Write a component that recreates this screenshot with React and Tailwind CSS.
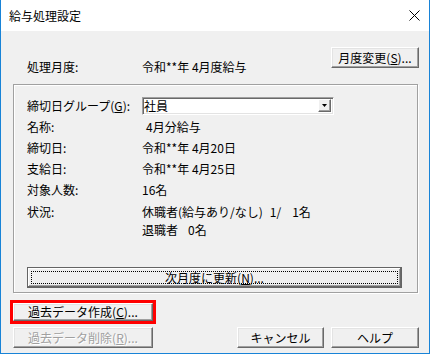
import React from "react";

const font = { fontFamily: '"Noto Sans CJK JP", "Liberation Sans", sans-serif' };

function Btn({ children, className = "", disabled = false }) {
  return (
    <div
      className={
        "flex items-center justify-center bg-[#f0f0f0] border border-t-white border-l-white border-b-[#696969] border-r-[#696969] shadow-[inset_-1px_-1px_0_#a0a0a0,inset_1px_1px_0_#e3e3e3] text-[12px] leading-[14px] " +
        (disabled ? "text-[#a0a0a0] [text-shadow:1px_1px_0_#fff] " : "text-black ") +
        className
      }
    >
      {children}
    </div>
  );
}

function Row({ label, children, h = "h-[21px]" }) {
  return (
    <div className={"flex items-center " + h}>
      <div className="w-[115px] shrink-0">{label}</div>
      <div className="flex items-center whitespace-pre">{children}</div>
    </div>
  );
}

export default function App() {
  return (
    <div
      style={font}
      className="w-[430px] h-[354px] flex flex-col border-l border-r border-b border-[#1883d7] bg-[#f0f0f0] text-[12px] leading-[14px] text-black overflow-hidden"
    >
      {/* Title bar */}
      <div className="h-[31px] shrink-0 bg-white flex items-center pl-[8px] pr-[9px]">
        <span className="text-[12px] text-black">給与処理設定</span>
        <svg className="ml-auto" width="11" height="11" viewBox="0 0 11 11">
          <path d="M0.5 0.5 L10.5 10.5 M10.5 0.5 L0.5 10.5" stroke="#000" strokeWidth="1" fill="none" />
        </svg>
      </div>

      {/* Body */}
      <div className="flex-1 flex flex-col pl-[12px] pr-[10px]">
        <div className="flex items-start pt-[16px]">
          <div className="flex pl-[14px] pt-[13px]">
            <div className="w-[115px]">処理月度:</div>
            <div>令和**年 4月度給与</div>
          </div>
          <Btn className="ml-auto w-[88px] h-[21px]">
            月度変更(<span className="underline">S</span>)...
          </Btn>
        </div>

        {/* Group box */}
        <div className="mt-[10px] mr-[1px] h-[209px] border border-[#a0a0a0] shadow-[1px_1px_0_#fff,inset_1px_1px_0_#fff] flex flex-col pt-[10px] pb-[4px] pl-[13px] pr-[15px]">
          <Row label={<span>締切日グループ(<span className="underline">G</span>):</span>}>
            <div className="w-[192px] h-[18px] bg-white border border-t-[#a0a0a0] border-l-[#a0a0a0] border-b-white border-r-white shadow-[inset_1px_1px_0_#696969,inset_-1px_-1px_0_#e3e3e3] flex items-center pl-[1px] pr-[2px]">
              <span className="leading-[14px]">社員</span>
              <div className="ml-auto w-[13px] h-[13px] bg-[#f0f0f0] border border-t-white border-l-white border-b-[#696969] border-r-[#696969] shadow-[inset_-1px_-1px_0_#a0a0a0] flex items-center justify-center">
                <svg width="5" height="3" viewBox="0 0 5 3">
                  <path d="M0 0 H5 L2.5 3 Z" fill="#000" />
                </svg>
              </div>
            </div>
          </Row>
          <Row label="名称:">
            <span className="ml-[4px]">4月分給与</span>
          </Row>
          <Row label="締切日:">令和**年 4月20日</Row>
          <Row label="支給日:">令和**年 4月25日</Row>
          <Row label="対象人数:" h="h-[22px]">16名</Row>
          <Row label="状況:">
            <span>休職者(給与あり/なし)</span>
            <span className="ml-[7px]">1/</span>
            <span className="ml-[11px]">1名</span>
          </Row>
          <Row label="" h="h-[16px]">
            <span>退職者</span>
            <span className="ml-[10px]">0名</span>
          </Row>

          <div className="mt-auto h-[21px] border border-[#646464] shadow-[inset_-1px_-1px_0_#696969,inset_1px_1px_0_#fff,inset_-2px_-2px_0_#a0a0a0] bg-[#f0f0f0] p-[3px]">
            <div className="h-full border border-dotted border-black flex items-center justify-center">
              次月度に更新(<span className="underline">N</span>)...
            </div>
          </div>
        </div>

        {/* Bottom */}
        <div className="mt-[7px] -ml-[3px] w-[146px] h-[24px] border-[3px] border-[#ff0000]">
          <Btn className="w-full h-full">
            過去データ作成(<span className="underline">C</span>)...
          </Btn>
        </div>
        <div className="mt-[3px] flex">
          <Btn disabled className="w-[140px] h-[21px]">
            過去データ削除(<span className="underline">R</span>)...
          </Btn>
          <Btn className="ml-auto w-[87px] h-[21px]">キャンセル</Btn>
          <Btn className="ml-[7px] w-[88px] h-[21px]">ヘルプ</Btn>
        </div>
      </div>
    </div>
  );
}
